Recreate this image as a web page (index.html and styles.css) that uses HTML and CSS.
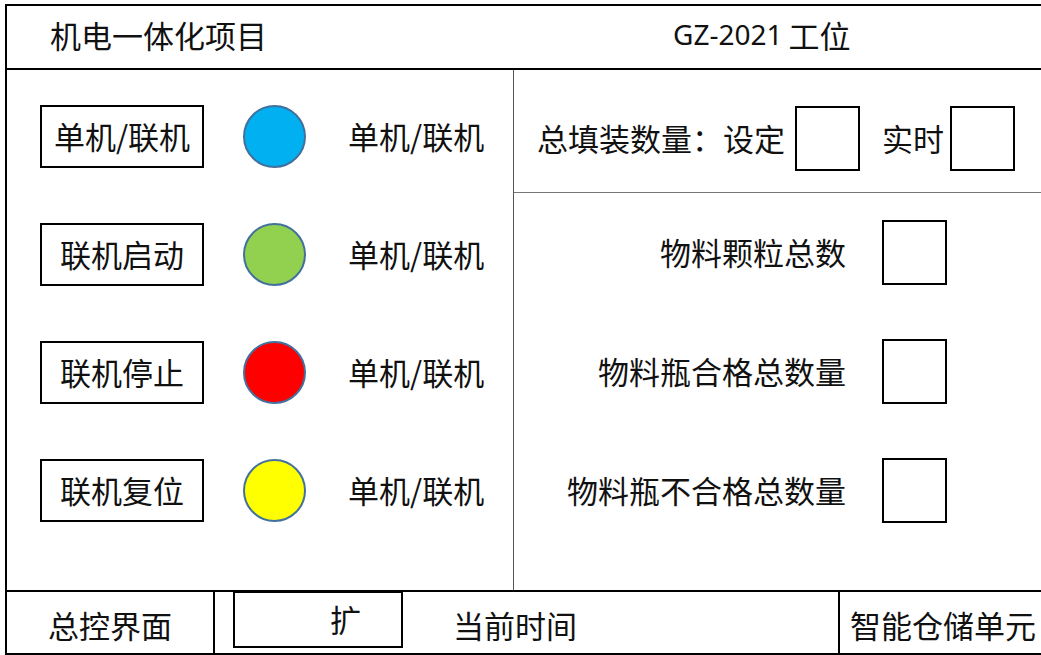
FILE: index.html
```html
<!DOCTYPE html>
<html lang="zh-CN">
<head>
    <meta charset="UTF-8">
    <meta name="viewport" content="width=device-width, initial-scale=1.0">
    <title>机电一体化项目</title>
    <link rel="stylesheet" href="styles.css">
</head>
<body>
    <div class="panel">
        <div class="header">
            <div class="title">机电一体化项目</div>
            <div class="station"><span class="code">GZ-2021</span>工位</div>
        </div>

        <div class="main">
            <div class="controls">
                <div class="row">
                    <div class="btn">单机/联机</div>
                    <div class="lamp blue"></div>
                    <div class="state">单机/联机</div>
                </div>
                <div class="row">
                    <div class="btn">联机启动</div>
                    <div class="lamp green"></div>
                    <div class="state">单机/联机</div>
                </div>
                <div class="row">
                    <div class="btn">联机停止</div>
                    <div class="lamp red"></div>
                    <div class="state">单机/联机</div>
                </div>
                <div class="row">
                    <div class="btn">联机复位</div>
                    <div class="lamp yellow"></div>
                    <div class="state">单机/联机</div>
                </div>
            </div>

            <div class="counts">
                <div class="fill">
                    <span>总填装数量：设定</span>
                    <div class="box set"></div>
                    <span class="live">实时</span>
                    <div class="box live-box"></div>
                </div>
                <div class="totals">
                    <div class="item">
                        <span class="label">物料颗粒总数</span>
                        <div class="box"></div>
                    </div>
                    <div class="item">
                        <span class="label">物料瓶合格总数量</span>
                        <div class="box"></div>
                    </div>
                    <div class="item">
                        <span class="label">物料瓶不合格总数量</span>
                        <div class="box"></div>
                    </div>
                </div>
            </div>
        </div>

        <div class="footer">
            <div class="foot-home">总控界面</div>
            <div class="foot-ext">扩</div>
            <div class="foot-time">当前时间</div>
            <div class="foot-unit">智能仓储单元</div>
        </div>
    </div>
</body>
</html>
```

FILE: styles.css
```css
body {
    margin: 0;
    font-family: "Noto Sans CJK SC", "Noto Sans", sans-serif;
    color: #111;
    background: #fff;
    overflow: hidden;
}
.panel {
    margin: 4px 0 0 5px;
    border-top: 2px solid #000;
    border-left: 2px solid #000;
    border-bottom: 2px solid #000;
    font-size: 31px;
    line-height: 1;
}
.header {
    display: grid;
    grid-template-columns: 507px 1fr;
    box-sizing: border-box;
    height: 64px;
    padding-bottom: 6px;
    border-bottom: 2px solid #000;
    align-items: center;
}
.title {
    padding-left: 43px;
}
.station {
    padding-left: 159px;
    display: flex;
    align-items: center;
}
.code {
    font-family: "Noto Sans", sans-serif;
    font-size: 28px;
    margin-right: 6px;
}
.main {
    display: grid;
    grid-template-columns: 507px 1fr;
    height: 520px;
}
.controls {
    border-right: 1px solid #555;
    padding: 35px 0 0 33px;
    display: flex;
    flex-direction: column;
    gap: 55px;
}
.row {
    display: flex;
    align-items: center;
    height: 63px;
}
.btn {
    width: 164px;
    height: 63px;
    box-sizing: border-box;
    border: 2px solid #000;
    display: flex;
    align-items: center;
    justify-content: center;
    padding-bottom: 3px;
}
.lamp {
    width: 63px;
    height: 63px;
    box-sizing: border-box;
    border-radius: 50%;
    border: 2px solid #41719c;
    margin-left: 39px;
}
.blue { background: #00b0f0; }
.green { background: #92d050; }
.red { background: #ff0000; }
.yellow { background: #ffff00; }
.state {
    margin-left: 42px;
    margin-bottom: 3px;
}
.fill {
    height: 123px;
    box-sizing: border-box;
    border-bottom: 1px solid #777;
    padding: 36px 0 0 23px;
    display: flex;
    align-items: flex-start;
}
.fill span {
    height: 62px;
    display: flex;
    align-items: center;
}
.box {
    width: 65px;
    height: 65px;
    box-sizing: border-box;
    border: 2px solid #000;
}
.set {
    margin-left: 10px;
}
.live {
    margin-left: 22px;
}
.live-box {
    margin-left: 6px;
}
.totals {
    padding: 27px 94px 0 0;
    display: flex;
    flex-direction: column;
    gap: 54px;
}
.item {
    display: flex;
    justify-content: flex-end;
    align-items: center;
    height: 65px;
}
.label {
    margin-right: 36px;
    margin-bottom: 3px;
}
.footer {
    display: flex;
    height: 61px;
    border-top: 2px solid #000;
    align-items: center;
}
.foot-home {
    width: 208px;
    height: 100%;
    border-right: 2px solid #000;
    display: flex;
    align-items: center;
    justify-content: center;
    padding-top: 4px;
    box-sizing: border-box;
}
.foot-ext {
    align-self: flex-start;
    margin: -1px 0 0 18px;
    width: 170px;
    height: 57px;
    box-sizing: border-box;
    border: 2px solid #000;
    display: flex;
    align-items: center;
    padding: 0 0 2px 95px;
}
.foot-time {
    margin-left: 50px;
    padding-top: 4px;
}
.foot-unit {
    margin-left: auto;
    width: 203px;
    height: 100%;
    box-sizing: border-box;
    border-left: 2px solid #000;
    display: flex;
    align-items: center;
    padding: 4px 0 0 10px;
}
```
